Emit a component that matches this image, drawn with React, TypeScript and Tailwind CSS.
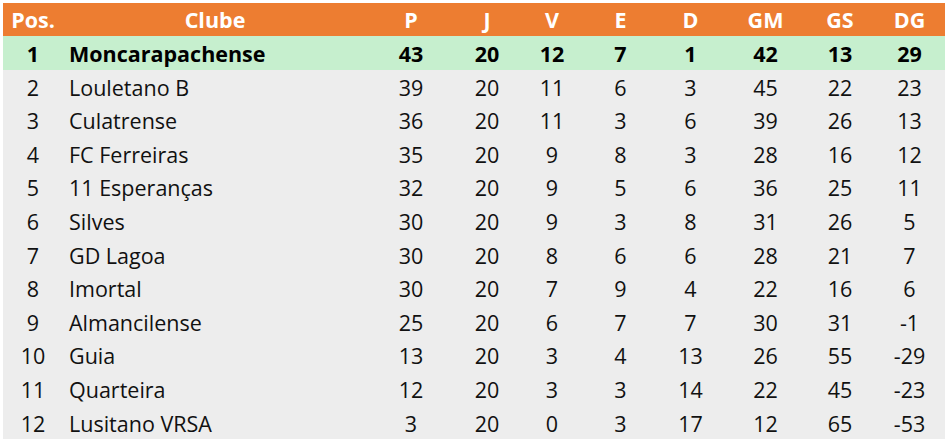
const cols = "grid grid-cols-[60px_304px_88px_64px_66px_71px_69px_81px_68px_71px]";

const rows: (string | number)[][] = [
  [1, "Moncarapachense", 43, 20, 12, 7, 1, 42, 13, 29],
  [2, "Louletano B", 39, 20, 11, 6, 3, 45, 22, 23],
  [3, "Culatrense", 36, 20, 11, 3, 6, 39, 26, 13],
  [4, "FC Ferreiras", 35, 20, 9, 8, 3, 28, 16, 12],
  [5, "11 Esperanças", 32, 20, 9, 5, 6, 36, 25, 11],
  [6, "Silves", 30, 20, 9, 3, 8, 31, 26, 5],
  [7, "GD Lagoa", 30, 20, 8, 6, 6, 28, 21, 7],
  [8, "Imortal", 30, 20, 7, 9, 4, 22, 16, 6],
  [9, "Almancilense", 25, 20, 6, 7, 7, 30, 31, -1],
  [10, "Guia", 13, 20, 3, 4, 13, 26, 55, -29],
  [11, "Quarteira", 12, 20, 3, 3, 14, 22, 45, -23],
  [12, "Lusitano VRSA", 3, 20, 0, 3, 17, 12, 65, -53],
];

const headers = ["Pos.", "Clube", "P", "J", "V", "E", "D", "GM", "GS", "DG"];

export default function App() {
  return (
    <div className="w-[949px] h-[447px] bg-white pt-[3px] pl-[3px]" style={{ fontFamily: "'Open Sans', Lato, sans-serif" }}>
      <div className="w-[942px] text-[21.5px] leading-none">
        <div className={`${cols} h-[33px] bg-[#ed7d31] text-white font-bold items-center pt-[1px]`}>
          {headers.map((h) => (
            <div key={h} className="text-center">
              {h}
            </div>
          ))}
        </div>
        {rows.map((r, i) => (
          <div
            key={i}
            className={`${cols} h-[33.6px] items-center pt-[2px] ${
              i === 0 ? "bg-[#c6efce] font-bold text-black" : "bg-[#ededed] text-[#111]"
            }`}
          >
            {r.map((c, j) => (
              <div key={j} className={j === 1 ? "pl-[6px] text-left" : "text-center"}>
                {c}
              </div>
            ))}
          </div>
        ))}
      </div>
    </div>
  );
}
